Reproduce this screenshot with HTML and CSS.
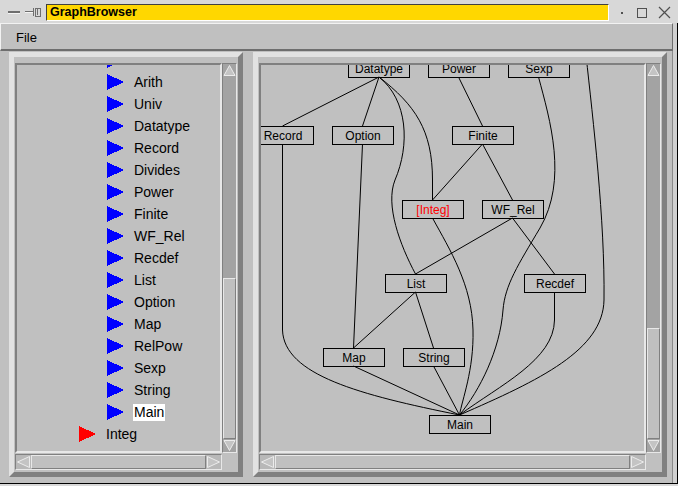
FILE: index.html
```html
<!DOCTYPE html>
<html>
<head>
<meta charset="utf-8">
<link rel="stylesheet" href="styles.css">
</head>
<body>
<div class="win">
  <div class="titlebar">
    <svg class="tb-left" width="46" height="23" viewBox="0 0 46 23">
      <rect x="8" y="11" width="12" height="2" fill="#6e6e6e"/>
      <rect x="8" y="13" width="12" height="1" fill="#f4f4f4"/>
      <rect x="25" y="11" width="8" height="1" fill="#6e6e6e"/>
      <rect x="25" y="12" width="8" height="1" fill="#f4f4f4"/>
      <rect x="33" y="8" width="1" height="8" fill="#6e6e6e"/>
      <rect x="35" y="8" width="5" height="8" fill="none" stroke="#6e6e6e" stroke-width="1" transform="translate(0.5 0.5)"/>
      <rect x="37" y="9" width="1" height="6" fill="#6e6e6e"/>
    </svg>
    <div class="title">GraphBrowser</div>
    <svg class="tb-right" width="69" height="23" viewBox="0 0 69 23">
      <rect x="12" y="12" width="2" height="2" fill="#505050"/>
      <rect x="28.5" y="8.5" width="9" height="9" fill="none" stroke="#505050"/>
      <path d="M50 7 L61 18 M61 7 L50 18" stroke="#505050" stroke-width="1.2" fill="none"/>
    </svg>
  </div>
  <div class="frame-row">
    <div class="client">
      <div class="menubar"><span class="menu">File</span></div>
      <div class="main">
        <div class="pane pane-left">
          <div class="view">
            <div class="canvas">
              <div class="list">
                <div class="row lvl1"><svg class="tri" width="17" height="16" viewBox="0 0 17 16"><polygon points="0,0 17,8 0,16" fill="#0000ff"/></svg></div>
                <div class="row lvl1"><svg class="tri" width="17" height="16" viewBox="0 0 17 16"><polygon points="0,0 17,8 0,16" fill="#0000ff"/></svg><span>Arith</span></div>
                <div class="row lvl1"><svg class="tri" width="17" height="16" viewBox="0 0 17 16"><polygon points="0,0 17,8 0,16" fill="#0000ff"/></svg><span>Univ</span></div>
                <div class="row lvl1"><svg class="tri" width="17" height="16" viewBox="0 0 17 16"><polygon points="0,0 17,8 0,16" fill="#0000ff"/></svg><span>Datatype</span></div>
                <div class="row lvl1"><svg class="tri" width="17" height="16" viewBox="0 0 17 16"><polygon points="0,0 17,8 0,16" fill="#0000ff"/></svg><span>Record</span></div>
                <div class="row lvl1"><svg class="tri" width="17" height="16" viewBox="0 0 17 16"><polygon points="0,0 17,8 0,16" fill="#0000ff"/></svg><span>Divides</span></div>
                <div class="row lvl1"><svg class="tri" width="17" height="16" viewBox="0 0 17 16"><polygon points="0,0 17,8 0,16" fill="#0000ff"/></svg><span>Power</span></div>
                <div class="row lvl1"><svg class="tri" width="17" height="16" viewBox="0 0 17 16"><polygon points="0,0 17,8 0,16" fill="#0000ff"/></svg><span>Finite</span></div>
                <div class="row lvl1"><svg class="tri" width="17" height="16" viewBox="0 0 17 16"><polygon points="0,0 17,8 0,16" fill="#0000ff"/></svg><span>WF_Rel</span></div>
                <div class="row lvl1"><svg class="tri" width="17" height="16" viewBox="0 0 17 16"><polygon points="0,0 17,8 0,16" fill="#0000ff"/></svg><span>Recdef</span></div>
                <div class="row lvl1"><svg class="tri" width="17" height="16" viewBox="0 0 17 16"><polygon points="0,0 17,8 0,16" fill="#0000ff"/></svg><span>List</span></div>
                <div class="row lvl1"><svg class="tri" width="17" height="16" viewBox="0 0 17 16"><polygon points="0,0 17,8 0,16" fill="#0000ff"/></svg><span>Option</span></div>
                <div class="row lvl1"><svg class="tri" width="17" height="16" viewBox="0 0 17 16"><polygon points="0,0 17,8 0,16" fill="#0000ff"/></svg><span>Map</span></div>
                <div class="row lvl1"><svg class="tri" width="17" height="16" viewBox="0 0 17 16"><polygon points="0,0 17,8 0,16" fill="#0000ff"/></svg><span>RelPow</span></div>
                <div class="row lvl1"><svg class="tri" width="17" height="16" viewBox="0 0 17 16"><polygon points="0,0 17,8 0,16" fill="#0000ff"/></svg><span>Sexp</span></div>
                <div class="row lvl1"><svg class="tri" width="17" height="16" viewBox="0 0 17 16"><polygon points="0,0 17,8 0,16" fill="#0000ff"/></svg><span>String</span></div>
                <div class="row lvl1"><svg class="tri" width="17" height="16" viewBox="0 0 17 16"><polygon points="0,0 17,8 0,16" fill="#0000ff"/></svg><span class="sel">Main</span></div>
                <div class="row lvl0"><svg class="tri" width="17" height="16" viewBox="0 0 17 16"><polygon points="0,0 17,8 0,16" fill="#ff0000"/></svg><span>Integ</span></div>
              </div>
            </div>
            <div class="vscroll">
              <div class="arrow"><svg width="13" height="13" viewBox="0 0 13 13"><polygon points="6.5,1.5 12,11.5 1,11.5" fill="#c4c4c4" stroke="#ececec"/></svg></div>
              <div class="trough"><div class="thumb-v" style="height:161px"></div></div>
              <div class="arrow"><svg width="13" height="13" viewBox="0 0 13 13"><polygon points="1,1.5 12,1.5 6.5,11.5" fill="#c4c4c4" stroke="#ececec"/></svg></div>
            </div>
            <div class="hscroll">
              <div class="arrow-h"><svg width="15" height="14" viewBox="0 0 15 14"><polygon points="1.5,7 13.5,1.5 13.5,12.5" fill="#c4c4c4" stroke="#ececec"/></svg></div>
              <div class="thumb-h"></div>
              <div class="arrow-h"><svg width="15" height="14" viewBox="0 0 15 14"><polygon points="1.5,1.5 13.5,7 1.5,12.5" fill="#c4c4c4" stroke="#ececec"/></svg></div>
            </div>
            <div class="corner"></div>
          </div>
        </div>
        <div class="pane pane-right">
          <div class="view">
            <div class="canvas">
              <svg class="graph" width="384" height="386" viewBox="261 65 384 386">
                <g fill="none" stroke="#000" stroke-width="1">
                  <path d="M379,77 L282.5,126"/>
                  <path d="M379,77 L362.5,126"/>
                  <path d="M379,77 C408,100 410,145 395,180 C385,205 400,245 415.5,274"/>
                  <path d="M379,77 C415,105 432.5,130 432.5,180 L432.5,200"/>
                  <path d="M458.5,77 L482.5,126"/>
                  <path d="M482.5,144 L432.5,200"/>
                  <path d="M482.5,144 L512.5,200"/>
                  <path d="M512.5,218 L415.5,274"/>
                  <path d="M512.5,218 L554.5,274"/>
                  <path d="M415.5,292 L353.5,348"/>
                  <path d="M415.5,292 L433.5,348"/>
                  <path d="M362.5,144 L353.5,348"/>
                  <path d="M353.5,366 L459.5,415"/>
                  <path d="M433.5,366 L459.5,415"/>
                  <path d="M282.5,144 L282.5,330 C284,375 360,395 459.5,415"/>
                  <path d="M432.5,218 C450,250 472,285 473,330 C474,370 462,400 459.5,415"/>
                  <path d="M538.5,77 C550,120 568,180 540,228 C518,265 505,285 503,310 C500,350 480,390 459.5,415"/>
                  <path d="M554.5,292 L554.5,320 C554,360 500,385 459.5,415"/>
                  <path d="M586,55 C593,120 605,220 604,300 C603,350 540,380 459.5,415"/>
                </g>
                <g class="nodes" fill="#c0c0c0" stroke="#000" stroke-width="1">
                  <rect x="348.5" y="59.5" width="61" height="18"/>
                  <rect x="428.5" y="59.5" width="61" height="18"/>
                  <rect x="508.5" y="59.5" width="61" height="18"/>
                  <rect x="252.5" y="126.5" width="61" height="18"/>
                  <rect x="332.5" y="126.5" width="61" height="18"/>
                  <rect x="452.5" y="126.5" width="61" height="18"/>
                  <rect x="402.5" y="200.5" width="61" height="18"/>
                  <rect x="482.5" y="200.5" width="61" height="18"/>
                  <rect x="385.5" y="274.5" width="61" height="18"/>
                  <rect x="524.5" y="274.5" width="61" height="18"/>
                  <rect x="323.5" y="348.5" width="61" height="18"/>
                  <rect x="403.5" y="348.5" width="61" height="18"/>
                  <rect x="429.5" y="415.5" width="61" height="18"/>
                </g>
                <g class="labels" text-anchor="middle">
                  <text x="379" y="72.5">Datatype</text>
                  <text x="459" y="72.5">Power</text>
                  <text x="539" y="72.5">Sexp</text>
                  <text x="283" y="139.5">Record</text>
                  <text x="363" y="139.5">Option</text>
                  <text x="483" y="139.5">Finite</text>
                  <text class="red" x="433" y="213.5">[Integ]</text>
                  <text x="513" y="213.5">WF_Rel</text>
                  <text x="416" y="287.5">List</text>
                  <text x="555" y="287.5">Recdef</text>
                  <text x="354" y="361.5">Map</text>
                  <text x="434" y="361.5">String</text>
                  <text x="460" y="428.5">Main</text>
                </g>
              </svg>
            </div>
            <div class="vscroll">
              <div class="arrow"><svg width="13" height="13" viewBox="0 0 13 13"><polygon points="6.5,1.5 12,11.5 1,11.5" fill="#c4c4c4" stroke="#ececec"/></svg></div>
              <div class="trough"><div class="thumb-v" style="height:111px"></div></div>
              <div class="arrow"><svg width="13" height="13" viewBox="0 0 13 13"><polygon points="1,1.5 12,1.5 6.5,11.5" fill="#c4c4c4" stroke="#ececec"/></svg></div>
            </div>
            <div class="hscroll">
              <div class="arrow-h"><svg width="15" height="14" viewBox="0 0 15 14"><polygon points="1.5,7 13.5,1.5 13.5,12.5" fill="#c4c4c4" stroke="#ececec"/></svg></div>
              <div class="thumb-h"></div>
              <div class="arrow-h"><svg width="15" height="14" viewBox="0 0 15 14"><polygon points="1.5,1.5 13.5,7 1.5,12.5" fill="#c4c4c4" stroke="#ececec"/></svg></div>
            </div>
            <div class="corner"></div>
          </div>
        </div>
      </div>
    </div>
    <div class="rframe"></div>
  </div>
  <div class="bottom-line"></div>
</div>
</body>
</html>
```
FILE: styles.css
```css
* { box-sizing: border-box; }
html, body { margin: 0; padding: 0; }
body {
  width: 678px;
  height: 486px;
  overflow: hidden;
  background: #d8d8d8;
  font-family: "Liberation Sans", Arial, sans-serif;
}
.win {
  width: 678px;
  height: 486px;
  display: flex;
  flex-direction: column;
  background: #d8d8d8;
}
.titlebar {
  height: 23px;
  display: flex;
  align-items: flex-start;
  flex: none;
}
.tb-left, .tb-right { display: block; flex: none; }
.title {
  width: 563px;
  height: 17px;
  margin-top: 4px;
  background: #ffd700;
  border-top: 1px solid #404040;
  border-left: 1px solid #404040;
  border-bottom: 1px solid #ffffff;
  border-right: 1px solid #ffffff;
  font-weight: bold;
  font-size: 12.5px;
  line-height: 15px;
  padding-left: 3px;
  color: #000;
}
.frame-row {
  display: flex;
  height: 460px;
  flex: none;
}
.client {
  width: 673px;
  display: flex;
  flex-direction: column;
  background: #c0c0c0;
}
.rframe {
  flex: 1;
  border-right: 1px solid #000;
  background: #d0d0d0;
}
.menubar {
  height: 28px;
  flex: none;
  border-top: 1px solid #f2f2f2;
  border-left: 1px solid #f2f2f2;
  border-bottom: 2px solid #6e6e6e;
  border-right: 1px solid #6e6e6e;
  display: flex;
  align-items: center;
  padding-left: 15px;
}
.menu {
  font-size: 13px;
  color: #000;
  margin-top: 1px;
}
.main {
  flex: 1;
  display: flex;
  gap: 10px;
  padding: 1px 5px 6px 9px;
  border-right: 1px solid #8a8a8a;
}
.pane {
  border: 5px solid;
  border-color: #e2e2e2 #808080 #808080 #e2e2e2;
  padding: 6px 1px 2px 1px;
}
.pane-left { width: 234px; flex: none; }
.pane-right { flex: 1; }
.view {
  display: grid;
  grid-template-columns: 1fr 15px;
  grid-template-rows: 390px 16px;
  row-gap: 1px;
  height: 100%;
}
.canvas {
  border: 2px solid;
  border-color: #808080 #e8e8e8 #e8e8e8 #808080;
  overflow: hidden;
  background: #c0c0c0;
  position: relative;
}
.list {
  margin-top: -16px;
  display: flex;
  flex-direction: column;
  font-size: 14px;
  color: #000;
}
.row {
  height: 22px;
  display: flex;
  align-items: center;
  white-space: nowrap;
}
.row.lvl1 { padding-left: 90px; }
.row.lvl0 { padding-left: 62px; }
.tri {
  display: block;
  flex: none;
  margin-right: 10px;
  shape-rendering: crispEdges;
}
.row span { line-height: 17px; }
.sel {
  background: #ffffff;
  padding: 0 1px;
  margin-left: -1px;
}
.vscroll {
  border: 1px solid;
  border-color: #808080 #e8e8e8 #e8e8e8 #808080;
  background: #a3a3a3;
  display: flex;
  flex-direction: column;
}
.arrow {
  height: 13px;
  flex: none;
  display: flex;
  justify-content: center;
}
.arrow svg, .arrow-h svg { display: block; }
.trough {
  flex: 1;
  display: flex;
  flex-direction: column;
  justify-content: flex-end;
}
.thumb-v {
  background: #c0c0c0;
  border: 1px solid;
  border-color: #e8e8e8 #808080 #808080 #e8e8e8;
}
.hscroll {
  border: 1px solid;
  border-color: #808080 #e8e8e8 #e8e8e8 #808080;
  background: #b8b8b8;
  display: flex;
}
.arrow-h {
  width: 15px;
  flex: none;
}
.thumb-h {
  flex: 1;
  background: #c0c0c0;
  border: 1px solid;
  border-color: #e8e8e8 #808080 #808080 #e8e8e8;
}
.corner { background: #c0c0c0; }
.graph { display: block; }
.labels text {
  font-family: "Liberation Sans", Arial, sans-serif;
  font-size: 12px;
  fill: #000;
}
.labels text.red { fill: #ff0000; }
.nodes rect { fill: none; }
.bottom-line {
  height: 1px;
  background: #000;
  flex: none;
}
```
